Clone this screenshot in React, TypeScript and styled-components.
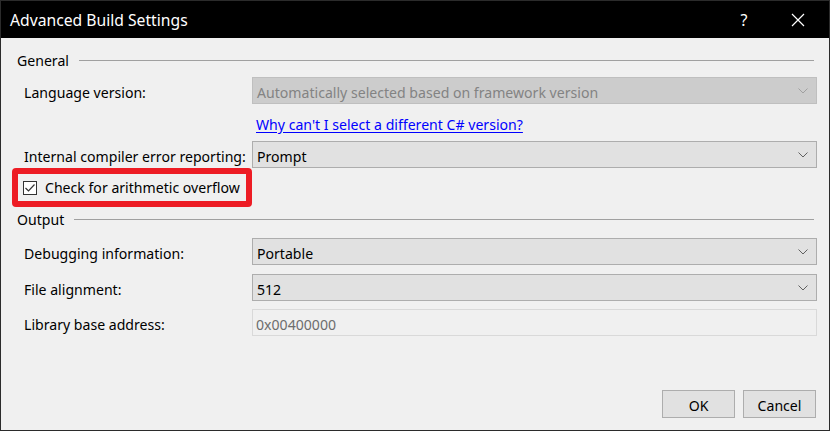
import React from 'react';
import styled, { createGlobalStyle } from 'styled-components';

const Global = createGlobalStyle`
  html, body { margin: 0; padding: 0; background: #f0f0f0; }
  body { font-family: "Noto Sans", "Open Sans", sans-serif; font-size: 14.1px; }
  * { box-sizing: border-box; }
`;

const Window = styled.div`
  width: 830px;
  height: 431px;
  border: 1px solid #2b2b2b;
  background: #f0f0f0;
  display: flex;
  flex-direction: column;
`;

const TitleBar = styled.div`
  height: 37px;
  background: #000;
  color: #fff;
  display: flex;
  align-items: center;
  padding-left: 9px;
  font-size: 15.7px;
`;

const Title = styled.div`
  flex: 1;
`;

const TitleButton = styled.div<{ $w: number }>`
  width: ${(p) => p.$w}px;
  height: 37px;
  display: flex;
  align-items: center;
  justify-content: center;
  font-size: 16px;
`;

const Body = styled.div`
  flex: 1;
  display: flex;
  flex-direction: column;
  padding: 0 12px 12px 16px;
`;

const SectionHeader = styled.div<{ $mt: number }>`
  height: 20px;
  margin-top: ${(p) => p.$mt}px;
  display: flex;
  align-items: center;
  gap: 10px;
  padding-right: 3px;
  color: #000;
  &::after {
    content: '';
    flex: 1;
    height: 1px;
    background: #a0a0a0;
  }
`;

const Row = styled.div<{ $mt: number }>`
  display: grid;
  grid-template-columns: 228px 1fr;
  align-items: center;
  padding-left: 7px;
  margin-top: ${(p) => p.$mt}px;
  height: 27px;
`;

const Label = styled.div`
  color: #000;
  white-space: nowrap;
  padding-top: 3px;
`;

const Select = styled.div<{ $disabled?: boolean }>`
  height: 27px;
  display: flex;
  align-items: center;
  padding: 0 8px 0 4px;
  background: ${(p) => (p.$disabled ? '#cccccc' : '#e1e1e1')};
  border: 1px solid ${(p) => (p.$disabled ? '#bfbfbf' : '#adadad')};
  color: ${(p) => (p.$disabled ? '#838383' : '#000')};
`;

const SelectText = styled.span`
  flex: 1;
  white-space: nowrap;
  padding-top: 3px;
`;

const TextBox = styled.div`
  height: 27px;
  display: flex;
  align-items: center;
  padding: 3px 3px 0;
  background: #f0f0f0;
  border: 1px solid #d9d9d9;
  color: #6d6d6d;
`;

const LinkRow = styled.div`
  height: 20px;
  margin-top: 10px;
  padding-left: 239px;
  display: flex;
  align-items: center;
`;

const Link = styled.a`
  color: #0000ff;
  text-decoration: underline;
  text-underline-offset: 2px;
  cursor: pointer;
`;

const Highlight = styled.div`
  align-self: flex-start;
  margin-left: -5px;
  width: 240px;
  height: 39px;
  border: 6px solid #ed1c24;
  border-radius: 4px;
  display: flex;
  align-items: center;
  padding-left: 5px;
  gap: 8px;
  white-space: nowrap;
`;

const CheckBox = styled.div`
  width: 14px;
  height: 14px;
  flex: none;
  border: 1px solid #333;
  background: #fff;
  display: flex;
  align-items: center;
  justify-content: center;
`;

const Footer = styled.div`
  margin-top: auto;
  display: flex;
  justify-content: flex-end;
  gap: 8px;
  padding-right: 1px;
`;

const Button = styled.button`
  width: 73px;
  height: 28px;
  background: #e1e1e1;
  border: 1px solid #adadad;
  font-family: inherit;
  font-size: 14.1px;
  color: #000;
  padding: 2px 0 0;
`;

const Chevron = ({ color }: { color: string }) => (
  <svg width="10" height="6" viewBox="0 0 10 6">
    <path d="M0.5 0.5 L5 5 L9.5 0.5" fill="none" stroke={color} strokeWidth="1" />
  </svg>
);

const SelectBox = ({ value, disabled }: { value: string; disabled?: boolean }) => (
  <Select $disabled={disabled}>
    <SelectText>{value}</SelectText>
    <Chevron color={disabled ? '#a0a0a0' : '#606060'} />
  </Select>
);

export default function App() {
  return (
    <>
      <Global />
      <Window>
        <TitleBar>
          <Title>Advanced Build Settings</Title>
          <TitleButton $w={46}>?</TitleButton>
          <TitleButton $w={62}>
            <svg width="14" height="14" viewBox="0 0 14 14">
              <path d="M1 1 L13 13 M13 1 L1 13" stroke="#fff" strokeWidth="1.2" />
            </svg>
          </TitleButton>
        </TitleBar>
        <Body>
          <SectionHeader $mt={12}>General</SectionHeader>
          <Row $mt={7}>
            <Label>Language version:</Label>
            <SelectBox value="Automatically selected based on framework version" disabled />
          </Row>
          <LinkRow>
            <Link>Why can't I select a different C# version?</Link>
          </LinkRow>
          <Row $mt={7}>
            <Label>Internal compiler error reporting:</Label>
            <SelectBox value="Prompt" />
          </Row>
          <Highlight>
            <CheckBox>
              <svg width="12" height="12" viewBox="0 0 12 12">
                <path d="M1.5 6 L4.5 9 L10.5 2.5" fill="none" stroke="#333" strokeWidth="1.2" />
              </svg>
            </CheckBox>
            <span>Check for arithmetic overflow</span>
          </Highlight>
          <SectionHeader $mt={2}>Output</SectionHeader>
          <Row $mt={9}>
            <Label>Debugging information:</Label>
            <SelectBox value="Portable" />
          </Row>
          <Row $mt={9}>
            <Label>File alignment:</Label>
            <SelectBox value="512" />
          </Row>
          <Row $mt={8}>
            <Label>Library base address:</Label>
            <TextBox>0x00400000</TextBox>
          </Row>
          <Footer>
            <Button>OK</Button>
            <Button>Cancel</Button>
          </Footer>
        </Body>
      </Window>
    </>
  );
}
